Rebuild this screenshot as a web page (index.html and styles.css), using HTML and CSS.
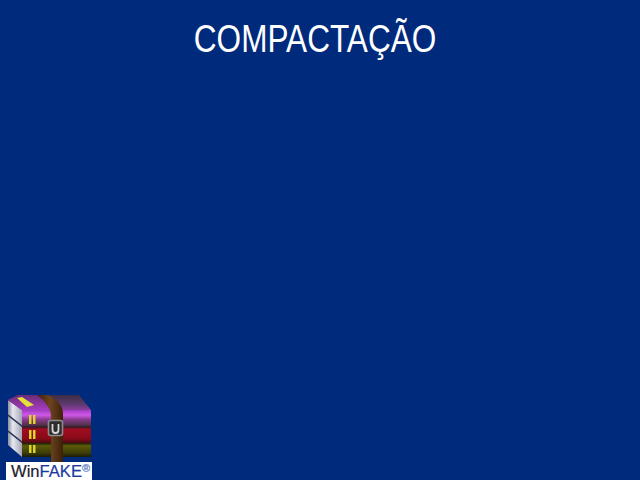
FILE: index.html
```html
<!DOCTYPE html>
<html lang="pt">
<head>
<meta charset="utf-8">
<title>Compactação</title>
<link rel="stylesheet" href="styles.css">
</head>
<body>
<main class="slide">
  <h1 class="title"><span class="title-text">COMPACTAÇÃO</span></h1>
  <div class="logo">
    <svg class="logo-icon" viewBox="0 0 100 72" width="100" height="72" aria-hidden="true">
      <defs>
        <linearGradient id="page" x1="0" y1="0" x2="1" y2="0">
          <stop offset="0" stop-color="#8e8ea4"/>
          <stop offset="0.35" stop-color="#e8e8f0"/>
          <stop offset="1" stop-color="#a4a4b8"/>
        </linearGradient>
        <linearGradient id="lid" x1="0" y1="0" x2="0" y2="1">
          <stop offset="0" stop-color="#3c2c44"/>
          <stop offset="0.6" stop-color="#5c3a6c"/>
          <stop offset="1" stop-color="#8a3c9c"/>
        </linearGradient>
        <linearGradient id="lid-left" x1="0" y1="0" x2="0" y2="1">
          <stop offset="0" stop-color="#6a2c78"/>
          <stop offset="1" stop-color="#a83cc0"/>
        </linearGradient>
        <linearGradient id="purple" x1="0" y1="0" x2="0" y2="1">
          <stop offset="0" stop-color="#a03cc0"/>
          <stop offset="0.3" stop-color="#d058e8"/>
          <stop offset="0.55" stop-color="#8a3c90"/>
          <stop offset="0.9" stop-color="#503048"/>
          <stop offset="1" stop-color="#2c1c24"/>
        </linearGradient>
        <linearGradient id="red" x1="0" y1="0" x2="0" y2="1">
          <stop offset="0" stop-color="#3c1c24"/>
          <stop offset="0.15" stop-color="#a00c20"/>
          <stop offset="0.7" stop-color="#8a0a18"/>
          <stop offset="1" stop-color="#4c0c10"/>
        </linearGradient>
        <linearGradient id="olive" x1="0" y1="0" x2="0" y2="1">
          <stop offset="0" stop-color="#1c1c08"/>
          <stop offset="0.2" stop-color="#5c5c08"/>
          <stop offset="0.7" stop-color="#3c3c08"/>
          <stop offset="1" stop-color="#1c1c08"/>
        </linearGradient>
        <linearGradient id="strap" x1="0" y1="0" x2="1" y2="0">
          <stop offset="0" stop-color="#3c2008"/>
          <stop offset="0.5" stop-color="#6c4420"/>
          <stop offset="1" stop-color="#3c2008"/>
        </linearGradient>
      </defs>
      <polygon points="8,10 22,20 22,36 8,25" fill="url(#page)"/>
      <polygon points="8,26 22,37 22,52 8,41" fill="url(#page)"/>
      <polygon points="8,42 22,53 22,67 8,55" fill="url(#page)"/>
      <path d="M8 25 22 36M8 41 22 52" stroke="#34344c" stroke-width="1.2"/>
      <polygon points="8,10 18,5 79,5 91,20 22,20" fill="url(#lid)"/>
      <polygon points="8,10 18,5 40,5 52,20 22,20" fill="url(#lid-left)"/>
      <polygon points="17,8 22,7 34,15 27,17" fill="#e4e03c"/>
      <rect x="22" y="20" width="69" height="17" fill="url(#purple)"/>
      <rect x="22" y="37" width="69" height="16" fill="url(#red)"/>
      <rect x="22" y="53" width="69" height="14" fill="url(#olive)"/>
      <path d="M29 25h2.500v9h-2.500zM33 25h2.500v9h-2.500zM29 40h2.500v9h-2.500zM33 40h2.500v9h-2.500zM29 55h2.500v8h-2.500zM33 55h2.500v8h-2.500z" fill="#dcd428"/>
      <path d="M37 5H48C55 8 63 14 63 24V72H51V26C51 18 44 10 37 5Z" fill="url(#strap)"/>
      <rect x="48.500" y="30.500" width="14" height="15" rx="2" fill="#2c2c2c" stroke="#8c8c90" stroke-width="1.600"/>
      <path d="M52.500 34v6a3 3 0 0 0 6 0v-6" fill="none" stroke="#d8d8d8" stroke-width="1.800"/>
    </svg>
    <div class="logo-label"><span class="win">Win</span><span class="fake">FAKE</span><sup class="reg">®</sup></div>
  </div>
</main>
</body>
</html>
```
FILE: styles.css
```css
html, body {
  margin: 0;
  padding: 0;
}
.slide {
  width: 640px;
  height: 480px;
  background: #002a7c;
  display: flex;
  flex-direction: column;
  justify-content: space-between;
  overflow: hidden;
  font-family: "Liberation Sans", Arial, sans-serif;
}
.title {
  margin: 0;
  padding: 17px 10px 0 0;
  text-align: center;
  color: #fff;
  font-size: 38px;
  line-height: 44px;
  font-weight: 400;
}
.title-text {
  display: inline-block;
  transform: scaleX(0.83);
}
.logo {
  width: 100px;
  display: flex;
  flex-direction: column;
}
.logo-icon {
  display: block;
}
.logo-label {
  margin-left: 6px;
  width: 86px;
  height: 18px;
  background: #fff;
  font-size: 16.6px;
  line-height: 19px;
  padding-left: 5px;
  box-sizing: border-box;
  white-space: nowrap;
  overflow: hidden;
  -webkit-text-stroke: 0.2px;
}
.win { color: #1c1c2c; }
.fake { color: #1a3aa0; }
.reg {
  font-size: 11px;
  line-height: 0;
  font-weight: 700;
  vertical-align: 5px;
  color: #6a86c4;
}
```
